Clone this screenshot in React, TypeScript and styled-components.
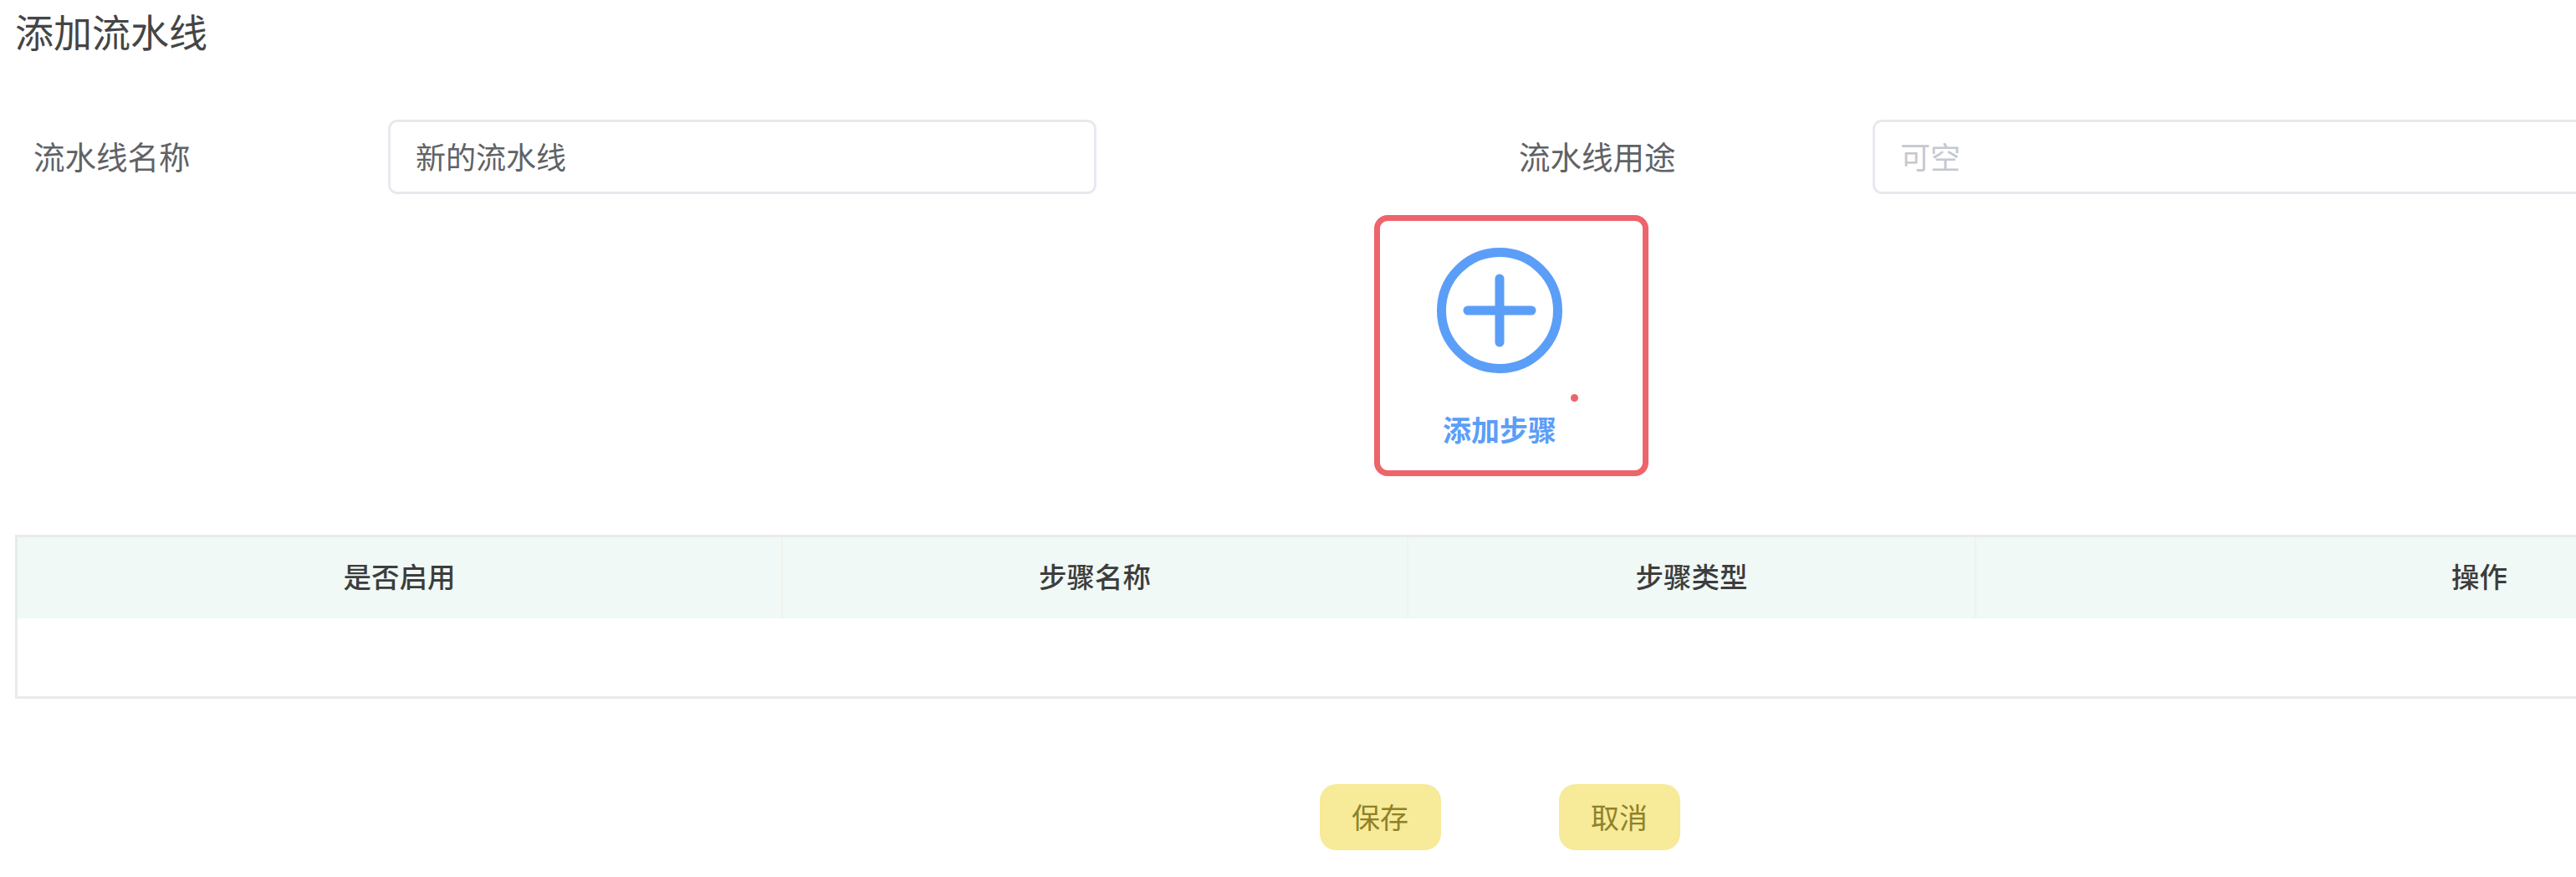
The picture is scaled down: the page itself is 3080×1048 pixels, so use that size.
import React from "react";
import styled, { createGlobalStyle } from "styled-components";

const Global = createGlobalStyle`
  html, body { margin: 0; padding: 0; background: #fff; overflow: hidden; }
  body { font-family: "Noto Sans CJK SC", "Noto Sans", sans-serif; }
  * { box-sizing: border-box; }
`;

const Page = styled.div`
  width: 3080px;
  height: 1048px;
  overflow: hidden;
  padding-left: 20px;
`;

const Content = styled.div`
  width: 3546px;
  display: flex;
  flex-direction: column;
`;

const Title = styled.h1`
  margin: 0 0 69px -2px;
  height: 74px;
  font-size: 46px;
  line-height: 72px;
  font-weight: 400;
  color: #454545;
`;

const FormRow = styled.div`
  display: flex;
  height: 89px;
`;

const Label = styled.label<{ $width: number }>`
  width: ${(p) => p.$width}px;
  flex: none;
  font-size: 37.5px;
  line-height: 86px;
  padding-left: 20px;
  color: #606266;
`;

const FieldInput = styled.input<{ $width: number; $gap?: number }>`
  width: ${(p) => p.$width}px;
  margin-right: ${(p) => p.$gap ?? 0}px;
  flex: none;
  height: 89px;
  padding: 0 30px 3px;
  border: 3px solid #e8e9ef;
  border-radius: 11px;
  background: #fff;
  font-family: inherit;
  font-size: 36px;
  color: #606266;
  outline: none;
  &::placeholder { color: #c6c8d0; opacity: 1; }
`;

const AddStep = styled.div`
  position: relative;
  align-self: center;
  margin-top: 64px;
  width: 150px;
  height: 240px;
  display: flex;
  flex-direction: column;
  align-items: center;
`;

const PlusIcon = styled.svg`
  width: 150px;
  height: 150px;
  flex: none;
`;

const AddText = styled.span`
  margin-top: 43px;
  font-size: 34px;
  line-height: 48px;
  font-weight: 700;
  color: #5b9ef8;
  white-space: nowrap;
`;

const HighlightBox = styled.div`
  position: absolute;
  left: -75px;
  top: -39px;
  width: 328px;
  height: 312px;
  border: 7px solid #ee646b;
  border-radius: 16px;
  pointer-events: none;
`;

const RedDot = styled.span`
  position: absolute;
  left: 160px;
  top: 175px;
  width: 9px;
  height: 9px;
  border-radius: 50%;
  background: #ee646b;
`;

const Table = styled.div`
  margin: 103px 0 0 -2px;
  height: 196px;
  border: 3px solid #e9eaec;
  border-right: 0;
`;

const HeadRow = styled.div`
  display: grid;
  grid-template-columns: 915px 748px 679px 1fr;
  height: 97px;
  background: #f0f9f5;
`;

const HeadCell = styled.div<{ $last?: boolean }>`
  display: flex;
  align-items: center;
  justify-content: center;
  font-size: 33.5px;
  font-weight: 500;
  line-height: 1;
  padding-bottom: 6px;
  color: #3d3d3d;
  border-right: ${(p) => (p.$last ? "0" : "2px solid #f1f3ec")};
`;

const Actions = styled.div`
  margin-top: 102px;
  display: flex;
  justify-content: center;
  gap: 141px;
`;

const ActionButton = styled.button`
  width: 145px;
  height: 79px;
  padding: 0 0 2px;
  border: 0;
  border-radius: 20px;
  background: #f7ea98;
  font-family: inherit;
  font-size: 34px;
  color: #8f8128;
`;

export default function App() {
  return (
    <Page>
      <Global />
      <Content>
        <Title>添加流水线</Title>
        <FormRow>
          <Label $width={444}>流水线名称</Label>
          <FieldInput $width={847} $gap={485} readOnly value="新的流水线" />
          <Label $width={443}>流水线用途</Label>
          <FieldInput $width={900} readOnly placeholder="可空" />
        </FormRow>
        <AddStep>
          <PlusIcon viewBox="0 0 150 150" fill="none" stroke="#5b9ef8" strokeWidth="11" strokeLinecap="round">
            <circle cx="75" cy="75" r="69.5" />
            <path d="M75 37v76M37 75h76" />
          </PlusIcon>
          <AddText>添加步骤</AddText>
          <HighlightBox />
          <RedDot />
        </AddStep>
        <Table>
          <HeadRow>
            <HeadCell>是否启用</HeadCell>
            <HeadCell>步骤名称</HeadCell>
            <HeadCell>步骤类型</HeadCell>
            <HeadCell $last>操作</HeadCell>
          </HeadRow>
        </Table>
        <Actions>
          <ActionButton>保存</ActionButton>
          <ActionButton>取消</ActionButton>
        </Actions>
      </Content>
    </Page>
  );
}
